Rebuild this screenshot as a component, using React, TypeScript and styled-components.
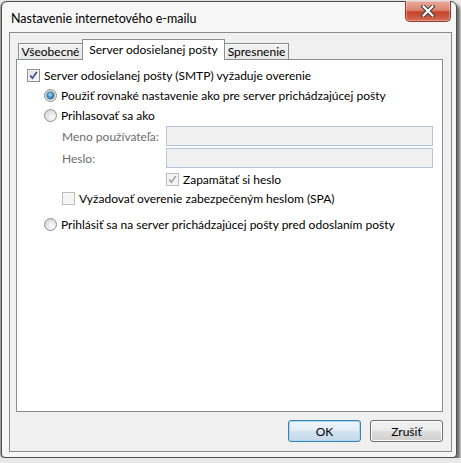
import React from 'react';
import styled, { createGlobalStyle } from 'styled-components';

const GlobalStyle = createGlobalStyle`
  html, body {
    margin: 0;
    padding: 0;
    background: #e9e9e9;
  }
  body {
    font-family: Lato, "Noto Sans", sans-serif;
    font-size: 12px;
    color: #000;
  }
`;

const Window = styled.div`
  box-sizing: border-box;
  width: 456px;
  height: 457px;
  margin: 1px 0 0 1px;
  border: 1px solid #4f4f4f;
  border-radius: 6px 6px 4px 4px;
  background: #f6f6f6;
  box-shadow: -1px 0 1px rgba(0, 0, 0, 0.35), 3px 3px 3px rgba(0, 0, 0, 0.55);
  padding: 0 4px 5px 7px;
  display: flex;
  flex-direction: column;
`;

const TitleBar = styled.div`
  height: 30px;
  display: flex;
  justify-content: space-between;
  align-items: flex-start;
  margin-left: -7px;
  margin-right: -4px;
`;

const Title = styled.div`
  padding: 9px 0 0 9px;
  font-size: 12.5px;
  line-height: 16px;
  color: #000;
`;

const CloseButton = styled.div`
  box-sizing: border-box;
  width: 46px;
  height: 21px;
  margin: -1px 5px 0 0;
  border: 1px solid #8c3a2c;
  border-top: none;
  border-radius: 0 0 5px 5px;
  background: linear-gradient(#e9a99b 0%, #dc8672 45%, #c5422a 55%, #d36a50 100%);
  box-shadow: inset 0 0 0 1px rgba(255, 255, 255, 0.35);
  display: flex;
  align-items: center;
  justify-content: center;
`;

const Client = styled.div`
  flex: 1;
  border: 1px solid #8a8a8a;
  background: #f0f0f0;
  padding: 7px 8px 0 6px;
  display: flex;
  flex-direction: column;
`;

const TabStrip = styled.div`
  display: flex;
  align-items: flex-end;
  height: 20px;
  padding-left: 2px;
  position: relative;
  z-index: 1;
  margin-bottom: -1px;
`;

const Tab = styled.div<{ $w: number; $active?: boolean }>`
  box-sizing: border-box;
  width: ${p => p.$w}px;
  height: ${p => (p.$active ? 21 : 17)}px;
  margin-left: ${p => (p.$active ? -1 : 0)}px;
  margin-right: ${p => (p.$active ? -1 : 0)}px;
  border: 1px solid #898c95;
  border-bottom: ${p => (p.$active ? 'none' : '1px solid #898c95')};
  background: ${p => (p.$active ? '#fff' : 'linear-gradient(#f3f3f3, #e5e5e5)')};
  box-shadow: ${p => (p.$active ? 'none' : 'inset 1px 1px 0 #fcfcfc')};
  position: relative;
  z-index: ${p => (p.$active ? 2 : 1)};
  display: flex;
  justify-content: center;
  align-items: ${p => (p.$active ? 'flex-start' : 'center')};
  padding-top: ${p => (p.$active ? 2 : 0)}px;
  white-space: nowrap;
  line-height: 15px;
`;

const Panel = styled.div`
  box-sizing: border-box;
  height: 353px;
  border: 1px solid #898c95;
  background: #fff;
  padding: 5px 0 0 10px;
  display: flex;
  flex-direction: column;
`;

const Row = styled.div<{ $h?: number; $indent?: number; $top?: number }>`
  height: ${p => p.$h ?? 20}px;
  margin-top: ${p => p.$top ?? 0}px;
  padding-left: ${p => p.$indent ?? 0}px;
  display: flex;
  align-items: center;
  gap: 4px;
  white-space: nowrap;
`;

const Label = styled.span<{ $disabled?: boolean }>`
  color: ${p => (p.$disabled ? '#6d6d6d' : '#000')};
`;

const FieldLabel = styled(Label)`
  width: 100px;
`;

const Input = styled.div`
  box-sizing: border-box;
  width: 267px;
  height: 20px;
  border: 1px solid #b6c6d8;
  background: #f0f0f0;
`;

const Box = styled.span<{ $disabled?: boolean }>`
  box-sizing: border-box;
  width: 13px;
  height: 13px;
  flex: none;
  border: 1px solid ${p => (p.$disabled ? '#bcbcbc' : '#8e8f8f')};
  background: ${p =>
    p.$disabled
      ? '#f4f4f4'
      : 'linear-gradient(135deg, #dcdcdc 0%, #f0f0f0 60%, #fbfbfb 100%)'};
  box-shadow: inset 0 0 0 1px ${p => (p.$disabled ? '#f7f7f7' : '#f4f4f4')};
  display: flex;
  align-items: center;
  justify-content: center;
`;

const Radio = styled.span<{ $checked?: boolean }>`
  box-sizing: border-box;
  width: 13px;
  height: 13px;
  flex: none;
  border-radius: 50%;
  border: 1px solid #8f9091;
  background: radial-gradient(circle at 65% 70%, #fdfdfd 0%, #e8e8e8 45%, #cbcbcb 100%);
  display: flex;
  align-items: center;
  justify-content: center;

  &::after {
    content: '';
    display: ${p => (p.$checked ? 'block' : 'none')};
    width: 7px;
    height: 7px;
    border-radius: 50%;
    background: radial-gradient(circle at 45% 40%, #b5e3fb 0%, #3d8fc4 45%, #1d4f7a 100%);
    box-shadow: 0 0 0 0.5px #27557e;
  }
`;

const Footer = styled.div`
  display: flex;
  justify-content: flex-end;
  gap: 9px;
  margin-top: 8px;
`;

const Button = styled.div<{ $default?: boolean }>`
  box-sizing: border-box;
  width: 73px;
  height: 22px;
  border-radius: 3px;
  border: 1px solid ${p => (p.$default ? '#3c7fb1' : '#707070')};
  box-shadow: inset 0 0 0 1px ${p => (p.$default ? '#a9dcf4' : '#fbfbfb')};
  background: ${p =>
    p.$default
      ? 'linear-gradient(#edf5fb 0%, #e2edf6 48%, #d0e2ef 52%, #c3d9ea 100%)'
      : 'linear-gradient(#f2f2f2 0%, #ebebeb 48%, #dddddd 52%, #cfcfcf 100%)'};
  display: flex;
  align-items: center;
  justify-content: center;
`;

const Check = ({ color }: { color: string }) => (
  <svg width="9" height="9" viewBox="0 0 9 9">
    <path d="M1.2 4.6 L3.4 7.2 L7.8 1" fill="none" stroke={color} strokeWidth="1.6" />
  </svg>
);

const CloseIcon = () => (
  <svg width="14" height="12" viewBox="0 0 14 12">
    <path d="M2.5 1.5 L11.5 10.5 M11.5 1.5 L2.5 10.5" stroke="#3b3b3b" strokeWidth="4.2" strokeLinecap="square" />
    <path d="M2.5 1.5 L11.5 10.5 M11.5 1.5 L2.5 10.5" stroke="#ffffff" strokeWidth="2.2" strokeLinecap="square" />
  </svg>
);

export default function App() {
  return (
    <>
      <GlobalStyle />
      <Window>
        <TitleBar>
          <Title>Nastavenie internetového e-mailu</Title>
          <CloseButton>
            <CloseIcon />
          </CloseButton>
        </TitleBar>
        <Client>
          <TabStrip>
            <Tab $w={65}>Všeobecné</Tab>
            <Tab $w={143} $active>Server odosielanej pošty</Tab>
            <Tab $w={65}>Spresnenie</Tab>
          </TabStrip>
          <Panel>
            <Row>
              <Box>
                <Check color="#2f4d86" />
              </Box>
              <Label>Server odosielanej pošty (SMTP) vyžaduje overenie</Label>
            </Row>
            <Row $indent={17}>
              <Radio $checked />
              <Label>Použiť rovnaké nastavenie ako pre server prichádzajúcej pošty</Label>
            </Row>
            <Row $indent={17}>
              <Radio />
              <Label>Prihlasovať sa ako</Label>
            </Row>
            <Row $h={22} $indent={35}>
              <FieldLabel $disabled>Meno používateľa:</FieldLabel>
              <Input />
            </Row>
            <Row $h={22} $indent={35}>
              <FieldLabel $disabled>Heslo:</FieldLabel>
              <Input />
            </Row>
            <Row $indent={139}>
              <Box $disabled>
                <Check color="#a2a2a2" />
              </Box>
              <Label>Zapamätať si heslo</Label>
            </Row>
            <Row $h={18} $indent={35}>
              <Box $disabled />
              <Label>Vyžadovať overenie zabezpečeným heslom (SPA)</Label>
            </Row>
            <Row $indent={17} $top={7}>
              <Radio />
              <Label>Prihlásiť sa na server prichádzajúcej pošty pred odoslaním pošty</Label>
            </Row>
          </Panel>
          <Footer>
            <Button $default>OK</Button>
            <Button>Zrušiť</Button>
          </Footer>
        </Client>
      </Window>
    </>
  );
}
